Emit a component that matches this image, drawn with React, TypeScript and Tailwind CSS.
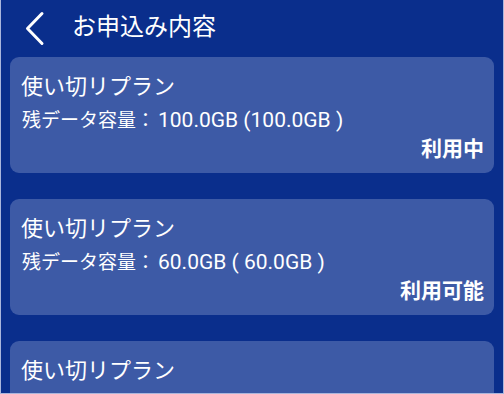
const plans = [
  { name: "使い切リプラン", amount: "100.0GB (100.0GB )", status: "利用中" },
  { name: "使い切リプラン", amount: "60.0GB ( 60.0GB )", status: "利用可能" },
  { name: "使い切リプラン", amount: "40.0GB ( 40.0GB )", status: "利用可能" },
];

const font = { fontFamily: 'Roboto, "Noto Sans CJK JP", sans-serif' };

export default function App() {
  return (
    <div
      className="w-[504px] h-[394px] overflow-hidden bg-[#0a2e8c] text-white border-l border-r border-b border-[#aab6dc] flex flex-col"
      style={font}
    >
      {/* ヘッダー */}
      <div className="h-[57px] shrink-0 flex items-center pb-[4px]">
        <svg width="48" height="40" viewBox="0 0 48 40" className="ml-[9px] mt-[2px] shrink-0">
          <polyline
            points="32,5.5 17.5,20.5 32,35.5"
            fill="none"
            stroke="white"
            strokeWidth="3"
            strokeLinecap="round"
            strokeLinejoin="round"
          />
        </svg>
        <h1 className="ml-[14px] text-[24px] leading-[30px]">お申込み内容</h1>
      </div>

      {/* プラン一覧 */}
      <div className="flex flex-col gap-[26px] px-[9px]">
        {plans.map((p, i) => (
          <div key={i} className="h-[116px] shrink-0 rounded-[9px] bg-[#3d5aa6] pt-[15px] pl-[11px] pr-[10px]">
            <div className="text-[22px] leading-[30px]">{p.name}</div>
            <div className="mt-[5px] pl-[1px] text-[19px] leading-[26px] whitespace-nowrap">
              残データ容量：<span className="ml-[3px] text-[21px]">{p.amount}</span>
            </div>
            <div className="mt-[1px] text-right text-[21px] leading-[28px] font-bold">{p.status}</div>
          </div>
        ))}
      </div>
    </div>
  );
}
